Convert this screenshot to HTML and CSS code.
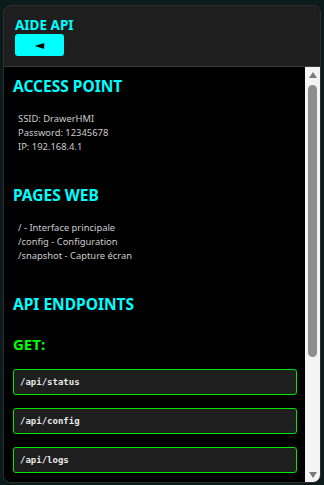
FILE: index.html
```html
<!DOCTYPE html>
<html lang="fr">
<head>
    <meta charset="UTF-8">
    <meta name="viewport" content="width=device-width, initial-scale=1.0">
    <title>Aide API</title>
    <link rel="stylesheet" href="styles.css">
</head>
<body>
    <div class="panel">
        <div class="header">
            <h1 class="title">AIDE API</h1>
            <button class="backButton" type="button">&#9668;</button>
        </div>

        <div class="body">
            <div class="content">
                <h2 class="sectionTitle">ACCESS POINT</h2>
                <div class="info">
                    <p>SSID: DrawerHMI</p>
                    <p>Password: 12345678</p>
                    <p>IP: 192.168.4.1</p>
                </div>

                <h2 class="sectionTitle">PAGES WEB</h2>
                <div class="info">
                    <p>/ - Interface principale</p>
                    <p>/config - Configuration</p>
                    <p>/snapshot - Capture écran</p>
                </div>

                <h2 class="sectionTitle">API ENDPOINTS</h2>

                <h3 class="method">GET:</h3>
                <div class="endpoint">/api/status</div>
                <div class="endpoint">/api/config</div>
                <div class="endpoint">/api/logs</div>
            </div>

            <!-- scrollbar drawn by hand -->
            <div class="scrollbar">
                <div class="arrow arrowUp"></div>
                <div class="track">
                    <div class="thumb"></div>
                </div>
                <div class="arrow arrowDown"></div>
            </div>
        </div>
    </div>
</body>
</html>
```

FILE: styles.css
```css
/* styles.css */
html, body {
    height: 100%;
}

body {
    font-family: 'Noto Sans', 'Liberation Sans', sans-serif;
    background-color: #0b1a1a;
    margin: 0;
    padding: 5px 3px 4px 3px;
    box-sizing: border-box;
}

.panel {
    height: 100%;
    display: flex;
    flex-direction: column;
    background-color: #1e1e1e;
    border: 1px solid #2e2e2e;
    border-radius: 8px;
    overflow: hidden;
}

.header {
    padding: 10px 11px 10px 11px;
    border-bottom: 1px solid #3a3a3a;
}

.title {
    margin: 0;
    color: #00ffff;
    font-size: 13.5px;
    line-height: 18px;
    font-weight: bold;
}

.backButton {
    display: block;
    width: 49px;
    height: 22px;
    padding: 0;
    border: none;
    border-radius: 3px;
    background-color: #00ffff;
    color: #000;
    font-family: 'DejaVu Sans', sans-serif;
    font-size: 12px;
    line-height: 22px;
    cursor: pointer;
}

.body {
    flex: 1;
    min-height: 0;
    display: flex;
    background-color: #000;
}

.content {
    flex: 1;
    overflow: hidden;
    padding: 9px 8px 0 9px;
}

.scrollbar {
    width: 15px;
    display: flex;
    flex-direction: column;
    background-color: #f4f4f4;
}

.arrow {
    height: 15px;
    display: flex;
    align-items: center;
    justify-content: center;
}

.arrowUp::before,
.arrowDown::before {
    content: "";
    width: 0;
    height: 0;
    border-left: 4px solid transparent;
    border-right: 4px solid transparent;
}

.arrowUp::before {
    border-bottom: 6px solid #7a7a7a;
}

.arrowDown::before {
    border-top: 6px solid #7a7a7a;
}

.track {
    flex: 1;
    padding: 3px;
}

.thumb {
    height: 272px;
    background-color: #8e8e8e;
    border-radius: 5px;
}

.sectionTitle {
    margin: 0 0 16px 0;
    color: #00ffff;
    font-size: 15.5px;
    line-height: 20px;
    font-weight: bold;
}

.info {
    margin: 0 0 31px 0;
    padding-left: 5px;
    color: #cccccc;
    font-size: 9.4px;
    line-height: 14px;
}

.info p {
    margin: 0;
}

.method {
    margin: 21px 0 16px 0;
    color: #00ff00;
    font-size: 15px;
    line-height: 18px;
    font-weight: bold;
}

.endpoint {
    height: 26px;
    line-height: 24px;
    box-sizing: border-box;
    margin-bottom: 13px;
    padding: 0 6px;
    background-color: #1e1e1e;
    border: 1px solid #00e600;
    border-radius: 3px;
    color: #e8e8e8;
    font-family: 'DejaVu Sans Mono', 'Liberation Mono', monospace;
    font-size: 9px;
    font-weight: bold;
}
```
